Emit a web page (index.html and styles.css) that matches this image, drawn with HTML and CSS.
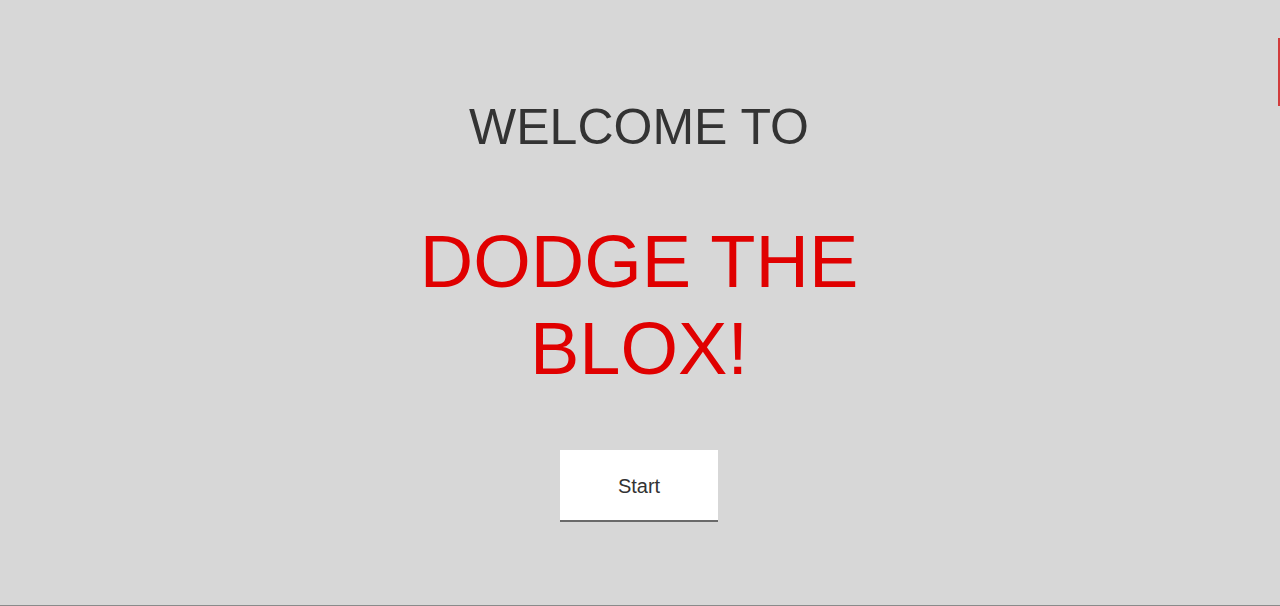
FILE: index.html
```html
<!DOCTYPE html>
<html>
<head>
<meta charset="utf-8">
<link rel="stylesheet" href="styles.css">
</head>
<body>
<div class="screen">
  <h2 class="welcome">WELCOME TO</h2>
  <h1 class="title">DODGE THE<br>BLOX!</h1>
  <button class="start">Start</button>
  <div class="edge-marker"></div>
</div>
</body>
</html>
```
FILE: styles.css
```css
html, body {
  margin: 0;
  padding: 0;
}
body {
  background: #d7d7d7;
  font-family: "Liberation Sans", Arial, sans-serif;
  overflow: hidden;
}
.screen {
  position: relative;
  box-sizing: border-box;
  height: 606px;
  border-bottom: 1px solid #8a8a8a;
  display: flex;
  flex-direction: column;
  align-items: center;
  padding-top: 99px;
  padding-right: 2px;
}
.welcome {
  margin: 0;
  font-weight: normal;
  font-size: 50px;
  line-height: 57px;
  color: #333333;
}
.title {
  margin: 62px 0 0;
  font-weight: normal;
  font-size: 74px;
  line-height: 87px;
  color: #e00000;
  text-align: center;
}
.start {
  margin-top: 58px;
  width: 158px;
  height: 72px;
  background: #ffffff;
  border: none;
  border-bottom: 2px solid #6a6a6a;
  font-family: "Liberation Sans", Arial, sans-serif;
  font-size: 20px;
  color: #333333;
  padding: 0;
  padding-top: 2px;
}
.edge-marker {
  position: absolute;
  right: 0;
  top: 38px;
  width: 2px;
  height: 68px;
  background: #d23c3c;
}
```
